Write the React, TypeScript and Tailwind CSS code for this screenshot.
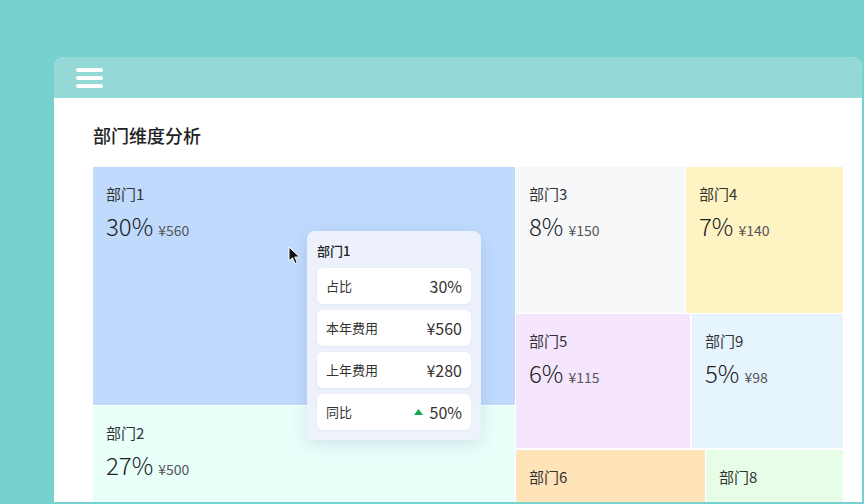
import React from 'react';

type Cell = {
  name: string;
  pct: string;
  amount: string;
  bg: string;
  size: string;
};

const fontStack = { fontFamily: '"Noto Sans CJK SC", "Noto Sans", sans-serif' };

const tooltipRows = [
  { label: '占比', value: '30%' },
  { label: '本年费用', value: '¥560' },
  { label: '上年费用', value: '¥280' },
  { label: '同比', value: '50%', up: true },
];

const TreeCell: React.FC<{ cell: Cell }> = ({ cell }) => (
  <div className={`${cell.bg} ${cell.size} px-[13px] pt-[17px] overflow-hidden`}>
    <div className="text-[15px] leading-5 text-[#333]">{cell.name}</div>
    <div className="mt-[6px] flex items-baseline gap-[5px] text-[#222]">
      <span className="text-[24px] font-light leading-8">{cell.pct}</span>
      {cell.amount && <span className="text-[14px] text-[#555]">{cell.amount}</span>}
    </div>
  </div>
);

const Tooltip: React.FC = () => (
  <div className="absolute left-[214px] top-[64px] w-[174px] rounded-lg bg-[#eef2fb]/95 p-[10px] shadow-[0_4px_16px_rgba(90,110,160,0.18)]">
    <div className="text-[13px] font-medium leading-[20px] text-[#222]">部门1</div>
    <div className="mt-[7px] flex flex-col gap-[6px]">
      {tooltipRows.map((row) => (
        <div
          key={row.label}
          className="flex h-[36px] items-center justify-between rounded-md bg-white px-[9px] shadow-[0_1px_3px_rgba(90,110,160,0.08)]"
        >
          <span className="text-[13px] text-[#333]">{row.label}</span>
          <span className="flex items-center gap-[7px] text-[16px] text-[#333]">
            {row.up && (
              <svg width="9" height="6" viewBox="0 0 9 6">
                <polygon points="4.5,0 9,6 0,6" fill="#16a34a" />
              </svg>
            )}
            {row.value}
          </span>
        </div>
      ))}
    </div>
  </div>
);

const Cursor: React.FC = () => (
  <svg
    className="absolute left-[195px] top-[79px]"
    width="13"
    height="20"
    viewBox="0 0 13 20"
  >
    <path d="M1 1 L1 15 L4.5 11.8 L7 17.5 L9.2 16.5 L6.8 11 L11.5 11 Z" fill="#111" stroke="#fff" strokeWidth="1" />
  </svg>
);

export default function App() {
  const cells: Record<string, Cell> = {
    d1: { name: '部门1', pct: '30%', amount: '¥560', bg: 'bg-[#bfdafd]', size: 'h-[238px] w-full' },
    d2: { name: '部门2', pct: '27%', amount: '¥500', bg: 'bg-[#e8fffa]', size: 'flex-1 w-full' },
    d3: { name: '部门3', pct: '8%', amount: '¥150', bg: 'bg-[#f6f8fa]', size: 'w-[169px] h-full' },
    d4: { name: '部门4', pct: '7%', amount: '¥140', bg: 'bg-[#fef3c2]', size: 'flex-1 h-full' },
    d5: { name: '部门5', pct: '6%', amount: '¥115', bg: 'bg-[#f5e5fd]', size: 'w-[174px] h-full' },
    d9: { name: '部门9', pct: '5%', amount: '¥98', bg: 'bg-[#e6f4fe]', size: 'flex-1 h-full' },
    d6: { name: '部门6', pct: '', amount: '', bg: 'bg-[#fee4b8]', size: 'w-[189px] h-full' },
    d8: { name: '部门8', pct: '', amount: '', bg: 'bg-[#e6fee7]', size: 'flex-1 h-full' },
  };

  return (
    <div className="h-[504px] w-[864px] overflow-hidden bg-[#76d1cf] pl-[54px] pt-[57px]" style={fontStack}>
      <div className="flex h-[445px] w-[808px] flex-col overflow-hidden rounded-t-[10px] bg-white">
        <div className="flex h-[41px] shrink-0 items-center bg-[#94d9d8] pl-[22px]">
          <div className="flex w-[27px] flex-col gap-[4px]">
            <span className="h-[4px] rounded-full bg-white" />
            <span className="h-[4px] rounded-full bg-white" />
            <span className="h-[4px] rounded-full bg-white" />
          </div>
        </div>
        <div className="flex flex-1 flex-col pl-[39px] pr-[19px] pt-[25px]">
          <h1 className="text-[18px] font-medium leading-6 text-[#222]">部门维度分析</h1>
          <div className="relative mt-[20px] flex flex-1 gap-px">
            <div className="flex w-[422px] flex-col gap-px">
              <TreeCell cell={cells.d1} />
              <TreeCell cell={cells.d2} />
            </div>
            <div className="flex flex-1 flex-col gap-px">
              <div className="flex h-[146px] gap-px">
                <TreeCell cell={cells.d3} />
                <TreeCell cell={cells.d4} />
              </div>
              <div className="flex h-[134px] gap-[2px]">
                <TreeCell cell={cells.d5} />
                <TreeCell cell={cells.d9} />
              </div>
              <div className="mt-px flex flex-1 gap-px">
                <TreeCell cell={cells.d6} />
                <TreeCell cell={cells.d8} />
              </div>
            </div>
            <Cursor />
            <Tooltip />
          </div>
        </div>
      </div>
    </div>
  );
}
